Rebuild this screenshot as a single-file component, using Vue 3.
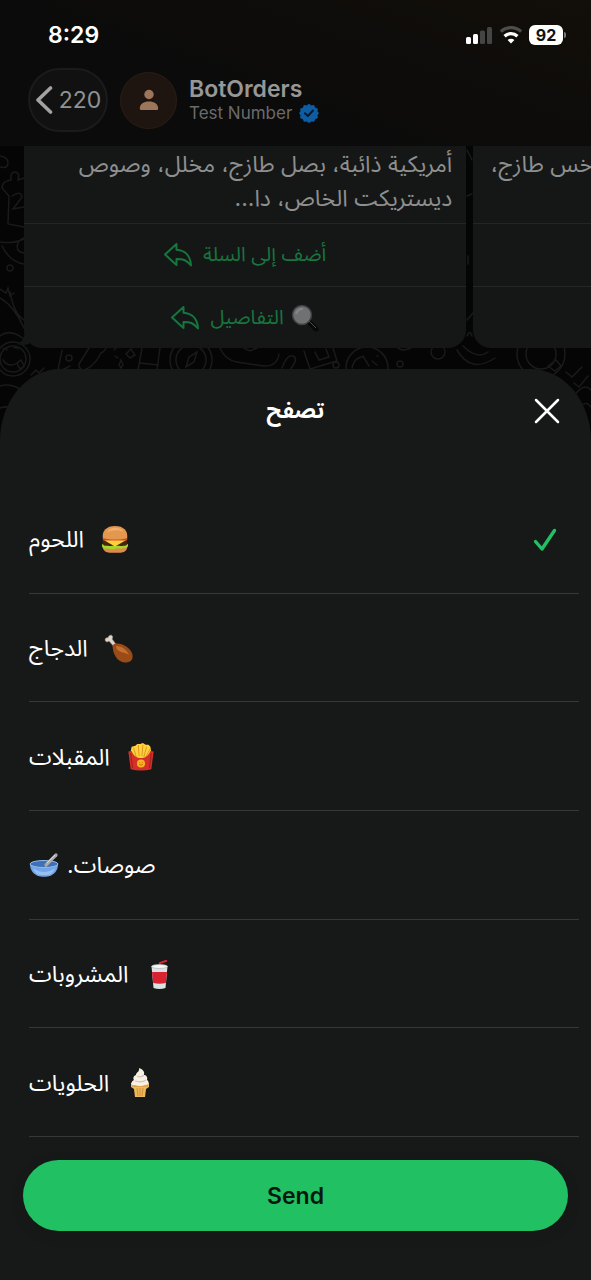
<script setup>
import { ref } from 'vue';

const selected = ref('meat');
const categories = [
    { id: 'meat', label: 'اللحوم', icon: 'burger', gap: 'wide' },
    { id: 'chicken', label: 'الدجاج', icon: 'drumstick', gap: 'wide' },
    { id: 'starters', label: 'المقبلات', icon: 'fries', gap: 'wide' },
    { id: 'sauces', label: 'صوصات.', icon: 'bowl', gap: 'tight' },
    { id: 'drinks', label: 'المشروبات', icon: 'cup', gap: 'wide' },
    { id: 'desserts', label: 'الحلويات', icon: 'cone', gap: 'wide' },
];
</script>

<template>
    <div class="screen">
        <header class="top">
            <div class="status">
                <span class="clock">8:29</span>
                <div class="indicators">
                    <svg width="27" height="18" viewBox="0 0 27 18" aria-hidden="true">
                        <rect x="0" y="11" width="5" height="7" rx="1.5" fill="#fff" />
                        <rect x="7" y="8" width="5" height="10" rx="1.5" fill="#fff" />
                        <rect x="14" y="4.5" width="5" height="13.5" rx="1.5" fill="#454544" />
                        <rect x="21" y="1" width="5" height="17" rx="1.5" fill="#454544" />
                    </svg>
                    <svg width="24" height="18" viewBox="0 0 24 18" fill="none" aria-hidden="true">
                        <path d="M1.8 5.6a15 15 0 0 1 20.400 0" stroke="#4d4d4c" stroke-width="3.2" />
                        <path d="M5.600 10.200a9.200 9.200 0 0 1 12.800 0" stroke="#fff" stroke-width="3.4" />
                        <path d="M12 17.5 8.600 14a4.900 4.900 0 0 1 6.800 0z" fill="#fff" />
                    </svg>
                    <span class="battery">92</span>
                </div>
            </div>
            <div class="contact">
                <button class="back" type="button">
                    <svg width="18" height="28" viewBox="0 0 18 28" fill="none" aria-hidden="true">
                        <path d="M15.500 2 3 14l12.500 12" stroke="#a2a2a2" stroke-width="3.6" stroke-linecap="round" stroke-linejoin="round" />
                    </svg>
                    <span>220</span>
                </button>
                <div class="avatar">
                    <svg width="20" height="22" viewBox="0 0 20 22" fill="#9c765a" aria-hidden="true">
                        <circle cx="10" cy="5.5" r="4.7" />
                        <path d="M.8 19.500c0-4.500 4-7 9.200-7s9.200 2.500 9.200 7c0 .9-.5 1.500-1.400 1.500H2.200c-.9 0-1.400-.6-1.400-1.500z" />
                    </svg>
                </div>
                <div class="who">
                    <h1>BotOrders</h1>
                    <p>
                        Test Number
                        <svg width="20" height="20" viewBox="0 0 20 20" aria-hidden="true">
                            <path d="M10 .8l2.300 1.700 2.800-.4 1.100 2.600 2.700 1.100-.4 2.800L20 10l-1.500 2.300.4 2.800-2.700 1.100-1.100 2.600-2.800-.4L10 20l-2.300-1.600-2.800.4-1.100-2.600-2.700-1.100.4-2.800L0 10l1.500-1.400-.4-2.800 2.700-1.100 1.100-2.600 2.800.4z" fill="#0d5da5" />
                            <path d="M6 10.300l2.800 2.800 5.200-5.600" fill="none" stroke="#0b1725" stroke-width="2" stroke-linecap="round" stroke-linejoin="round" />
                        </svg>
                    </p>
                </div>
            </div>
        </header>

        <main class="chat">
            <svg class="doodles" viewBox="0 0 591 340" preserveAspectRatio="xMidYMin slice" fill="none" stroke="#191a19" stroke-width="1.5" stroke-linecap="round" aria-hidden="true">
                <path d="M0 10q8 1 8 7t-8 4M2 42q0-7 9-8-1-8 4-8t3 8l6-2M2 42l7 8-1 28 16 3M12 50q9-6 10 1l-9 12 11-2M0 96q14 2 24-3M2 100q8 16 22 18M24 92c-8 2-10 14 0 15M0 143l6 4 2-5 2 8 4-3M0 152q14 8 24 30M10 146q4 22 14 28M0 190q10-8 24 3" />
                <circle cx="10" cy="122" r="3" />
                <circle cx="13" cy="213" r="17" />
                <circle cx="13" cy="213" r="13" />
                <path d="M3 203q3-2 4 1M14 202q3-2 4 1M3 214q6 9 16 2M17 217l4-3 3 6-4 3z" />
                <path d="M62 204l-4 20M79 218q0 6 5 6 10-3 17-17M79 218l10-16M101 207q3-1 5-5M114 204l3-3M115 210l3 2M126 208l5-5 4 6-5 3zM119 219l2-5 2 5-2 3zM142 202l-4 22M160 202l-3 22M140 217l18 2" />
                <circle cx="69" cy="212" r="3" />
                <circle cx="191" cy="214" r="21" />
                <circle cx="191" cy="214" r="15" />
                <path d="M186 221l3-10 8-5-3 10zM220 202q5 12 17 14l26 4q14 1 16-12M244 202l6 3 7-3M282 222q5-14 11-12t-3 14" />
                <path d="M304 205l6 18 27-8-4-13M315 206l4 8 10-3-3-8M398 202q4 4 13 0" />
                <circle cx="367" cy="222" r="21" />
                <path d="M352 222q2-10 10-11M363 210l6 10M372 215l5 4M377 210h1" />
                <circle cx="438" cy="206" r="7" />
                <circle cx="336" cy="219" r="3" />
                <circle cx="400" cy="218" r="3" />
                <path d="M457 204q14 24 38 8M463 200q14 14 25 6M467 4l5 10M467 50l5-2M468 110v8M467 174l6-7M467 190q3-7 5 0" />
                <circle cx="541" cy="208" r="24" />
                <circle cx="541" cy="208" r="15" />
                <path d="M548 220l8-6 5 6-6 5zM566 226l6 5 10-10M574 237l5 4 9-11M550 241q10 8 16 0M574 250q10-14 17-6M582 259q5-4 9 2" />
                <path d="M0 240q10-3 20 3M0 262q8-3 12 2M31 229l5-5 3 3 5-5M62 224l8-4" />
            </svg>
            <div class="carousel">
                <article class="card">
                    <p class="desc" dir="rtl">أمريكية ذائبة، بصل طازج، مخلل، وصوص ديستريكت الخاص، دا...</p>
                    <button class="reply" type="button">
                        <svg width="28" height="24" viewBox="0 0 28 24" aria-hidden="true">
                            <path d="M1 11.500 12.500 1v5.800C21 7.300 26.500 13 27 22.500c-4-5-7.500-6.800-14.500-6.600V22z" />
                        </svg>
                        <span dir="rtl">أضف إلى السلة</span>
                    </button>
                    <button class="reply" type="button">
                        <svg width="28" height="24" viewBox="0 0 28 24" aria-hidden="true">
                            <path d="M1 11.500 12.500 1v5.800C21 7.300 26.500 13 27 22.500c-4-5-7.500-6.800-14.500-6.600V22z" />
                        </svg>
                        <span class="details">
                            <span dir="rtl">التفاصيل</span>
                            <svg width="28" height="28" viewBox="0 0 28 28" aria-hidden="true">
                                <path d="M17 17l8 8" stroke="#080909" stroke-width="5" stroke-linecap="round" />
                                <path d="M18 17l7 7" stroke="#4c4e4e" stroke-width="1" />
                                <circle cx="11" cy="11" r="9.5" fill="#6f7172" stroke="#3e4040" stroke-width="1.5" />
                                <path d="M5 10a7 7 0 0 1 7-5" fill="none" stroke="#858787" stroke-width="2" />
                            </svg>
                        </span>
                    </button>
                    <svg class="tail" width="12" height="14" viewBox="0 0 12 14" aria-hidden="true">
                        <path d="M7 0q0 6-7 9 6 2 12 0V0z" fill="#151716" />
                    </svg>
                </article>
                <article class="card next">
                    <p class="desc" dir="rtl">خس طازج،</p>
                    <div class="reply"></div>
                    <div class="reply"></div>
                </article>
            </div>

            <form class="sheet" @submit.prevent>
                <div class="sheet-head">
                    <h2 dir="rtl">تصفح</h2>
                    <button class="close" type="button" aria-label="Close">
                        <svg width="26" height="26" viewBox="0 0 26 26" aria-hidden="true">
                            <path d="M2 2l22 22M24 2 2 24" stroke="#fff" stroke-width="2.5" stroke-linecap="round" />
                        </svg>
                    </button>
                </div>
                <div class="options">
                    <label v-for="item in categories" :key="item.id" class="option">
                        <span class="name" :class="item.gap">
                            <span dir="rtl">{{ item.label }}</span>
                            <svg v-if="item.icon === 'burger'" width="30" height="30" viewBox="-1 0 32 30" aria-hidden="true">
                                <path d="M2 22h26c0 5-4 6.500-7 6.500H9c-3 0-7-1.500-7-6.500z" fill="#dd8b4c" />
                                <path d="M1 20q3-3 6 0t6 0 6 0 5 0 5 0c0 4-3 4-5 3-3 3-5 0-8 1-4 2-6 0-9 0-4 1-6 0-6-4z" fill="#a4d52d" />
                                <path d="M2 16h26q1 5-3 5H5q-4 0-3-5z" fill="#43260f" />
                                <path d="M3 15h24l-5 3-7 4-7-4z" fill="#ffd03a" />
                                <path d="M2 13h26v2.500H2z" fill="#d6462e" />
                                <path d="M2 13C1 5 6 0 15 0s14 5 13 13c-8 2-18 2-26 0z" fill="#e4974e" />
                                <path d="M6 7q3-5 9-5t9 4q-9-3-18 1z" fill="#f0b06a" />
                            </svg>
                            <svg v-else-if="item.icon === 'drumstick'" width="30" height="30" viewBox="0 0 30 30" aria-hidden="true">
                                <path d="M5 7l7 8 2-2-6-8c2-3-1-5-3-3-1 1-1 2-1 2-3-1-4 3-1 4z" fill="#ddd4cc" stroke="#aa9990" stroke-width=".6" />
                                <path d="M10 10c7-2 15 3 18 9 2 6-1 10-7 9.500C13 28 9 20 8.500 12z" fill="#9a4b18" />
                                <path d="M12 12c6 0 11 4 13 9-4-3-7-2-10-4-2-1-3-3-3-5z" fill="#c4702f" />
                            </svg>
                            <svg v-else-if="item.icon === 'fries'" width="30" height="30" viewBox="-1 0 32 30" aria-hidden="true">
                                <path d="M4 9l1-5 4-1 2-2 3 0 3-1 3 2 3 0 2 2 1 6-3 9H7z" fill="#ffd13d" />
                                <path d="M7 5l3 10M12 2l1 12M17 2l-1 12M21 4l-3 11M25 6l-5 9" stroke="#dc941c" stroke-width="1" />
                                <path d="M1.500 9 5 8.500C7 14 11 16 15 16s8-2 10-7.500l3.500.5L26 28q-11 3-22 0z" fill="#d4302a" />
                                <path d="M4 11l2 16M26 11l-2 16" stroke="#a81e1c" stroke-width="1.2" />
                                <circle cx="15" cy="22" r="4.3" fill="#f8b51f" />
                                <path d="M13 21h1M16 21h1M13 23q2 1 4 0" fill="none" stroke="#cf6912" stroke-width="1" />
                            </svg>
                            <svg v-else-if="item.icon === 'bowl'" width="30" height="30" viewBox="0 0 30 30" aria-hidden="true">
                                <path d="M1 13h28c0 7-4 10-8 12-3 1-9 1-12 0-4-2-8-5-8-12z" fill="#72a5e8" />
                                <path d="M4 17q5 4 11 4t11-4q-2 6-7 7H11q-5-1-7-7z" fill="#97bff1" />
                                <ellipse cx="15" cy="13" rx="14" ry="3.5" fill="#3d70b4" stroke="#93bcf0" />
                                <path d="M17 14 27 4" stroke="#a9aaaa" stroke-width="3.2" stroke-linecap="round" />
                                <path d="M18 12l8-8" stroke="#dadada" stroke-width="1" />
                            </svg>
                            <svg v-else-if="item.icon === 'cup'" width="30" height="30" viewBox="0 0 30 30" aria-hidden="true">
                                <path d="M15 7l1-4 7-2.500" fill="none" stroke="#d62632" stroke-width="2" />
                                <path d="M7.500 6h16l-2 22q-6 2-12 0z" fill="#dce2e3" />
                                <path d="M8 12h15l-1.200 11q-6.300 1.500-12.600 0z" fill="#d9222f" />
                                <ellipse cx="15.5" cy="6.5" rx="8" ry="2" fill="#f5f7f7" stroke="#abb5b7" stroke-width=".7" />
                            </svg>
                            <svg v-else width="30" height="30" viewBox="0 0 30 30" aria-hidden="true">
                                <path d="M6 15h18v4l-3 2-1 8h-10l-1-8L6 19z" fill="#eeb95b" />
                                <path d="M7 18h16M12 20l1 8M15 20v8M18 20l-1 8" stroke="#c88731" stroke-width=".8" />
                                <path d="M14 0c1 4-3 4-3 7-3 1-3 4-2 5-4 2-3 6 1 5q5 2 10 0c5 0 4-4 2-5 1-3-1-5-3-5 1-4-2-6-5-7z" fill="#f7f1e5" />
                                <path d="M12 8q4 2 7-1M10 13q7 2 11-1" fill="none" stroke="#cfc5b5" stroke-width="1.2" />
                            </svg>
                        </span>
                        <input v-model="selected" type="radio" name="category" :value="item.id" />
                        <svg class="check" width="24" height="24" viewBox="0 0 24 24" fill="none" aria-hidden="true">
                            <path d="M2.500 13.500 9 21 21.500 2.500" stroke="#21c063" stroke-width="3.4" stroke-linecap="round" stroke-linejoin="round" />
                        </svg>
                    </label>
                </div>
                <button class="send" type="submit">Send</button>
            </form>
        </main>
    </div>
</template>

<style>
body {
    margin: 0;
    background: #050505;
}
</style>

<style scoped>
.screen {
    display: flex;
    flex-direction: column;
    min-height: 100vh;
    overflow: hidden;
    color: #fff;
    font-family: Inter, 'Noto Sans Arabic', 'DejaVu Sans', sans-serif;
}
button {
    border: 0;
    padding: 0;
    background: none;
    color: inherit;
    font-family: inherit;
    cursor: pointer;
}
svg {
    flex: none;
}
h1,
h2,
p {
    margin: 0;
}
.top {
    background: linear-gradient(200deg, #120e09, #0b0b0b 60%);
    padding-bottom: 14px;
}
.status {
    display: flex;
    justify-content: space-between;
    align-items: center;
    height: 68px;
    padding: 2px 28px 0 48px;
    box-sizing: border-box;
}
.clock {
    font-size: 23px;
    font-weight: 600;
}
.indicators {
    display: flex;
    align-items: center;
    gap: 6px;
}
.battery {
    position: relative;
    width: 34px;
    border-radius: 6px;
    background: #fff;
    color: #111;
    font-size: 16px;
    font-weight: 700;
    line-height: 20px;
    text-align: center;
}
.battery::after {
    content: '';
    position: absolute;
    top: 7px;
    right: -3px;
    width: 2px;
    height: 6px;
    border-radius: 0 2px 2px 0;
    background: #777;
}
.contact {
    display: flex;
    align-items: center;
    gap: 12px;
    padding: 0 28px;
}
.back {
    display: flex;
    align-items: center;
    justify-content: center;
    gap: 6px;
    width: 80px;
    height: 64px;
    box-sizing: border-box;
    border: 2px solid #1b1b1b;
    border-radius: 32px;
    background: #111;
    color: #929292;
    font-size: 23px;
}
.avatar {
    display: grid;
    place-items: center;
    width: 57px;
    height: 57px;
    box-sizing: border-box;
    border: 1px solid #2b1d16;
    border-radius: 50%;
    background: #1e1410;
}
.who h1 {
    color: #979797;
    font-size: 23px;
    font-weight: 600;
    line-height: 26px;
}
.who p {
    display: flex;
    align-items: center;
    gap: 7px;
    color: #6a6a6a;
    font-size: 17px;
    line-height: 22px;
}
.chat {
    position: relative;
    flex: 1;
    display: flex;
    flex-direction: column;
    background: #050505;
}
.doodles {
    position: absolute;
    top: 0;
    left: 0;
    width: 100%;
    height: 340px;
}
.carousel {
    position: relative;
    display: flex;
    gap: 7px;
    padding: 0 0 21px 24px;
}
.card {
    position: relative;
    flex: 0 0 78%;
    min-width: 0;
    box-sizing: border-box;
    border-radius: 0 0 18px 18px;
    background: #151716;
}
.next {
    flex: 1;
    margin-right: -2px;
    border-radius: 0 0 0 18px;
}
.desc {
    height: 77px;
    box-sizing: border-box;
    padding: 1px 14px 0;
    color: #8e8f8f;
    font-size: 23px;
    line-height: 34px;
}
.next .desc {
    padding: 1px 0 0;
    white-space: nowrap;
}
.reply {
    display: flex;
    justify-content: center;
    align-items: center;
    gap: 11px;
    width: 100%;
    height: 63px;
    box-sizing: border-box;
    border-top: 1px solid #242625;
    color: #17753f;
    font-size: 20px;
}
.reply:last-of-type {
    height: 62px;
}
.reply > svg {
    fill: none;
    stroke: #17753f;
    stroke-width: 2;
    stroke-linejoin: round;
}
.details {
    display: flex;
    align-items: center;
    gap: 7px;
}
.tail {
    position: absolute;
    left: -7px;
    bottom: -1px;
}
.sheet {
    position: relative;
    flex: 1;
    display: flex;
    flex-direction: column;
    border-radius: 60px 60px 0 0 / 72px 72px 0 0;
    background: #171918;
    padding-bottom: 49px;
}
.sheet-head {
    display: grid;
    grid-template-columns: 1fr auto 1fr;
    align-items: center;
    height: 84px;
    margin-bottom: 32px;
    padding: 0 31px;
}
.sheet-head h2 {
    grid-column: 2;
    font-size: 22px;
    font-weight: 700;
}
.close {
    display: flex;
    justify-self: end;
}
.options {
    flex: 1;
    display: flex;
    flex-direction: column;
    padding: 0 12px 0 29px;
}
.option {
    flex: 1;
    display: flex;
    justify-content: space-between;
    align-items: center;
    border-bottom: 1px solid #373938;
    padding: 2px 22px 0 0;
    cursor: pointer;
}
.name {
    display: flex;
    align-items: center;
    font-size: 23px;
}
.wide {
    gap: 16px;
}
.tight {
    flex-direction: row-reverse;
    gap: 8px;
}
.option input {
    appearance: none;
    width: 0;
    height: 0;
    margin: 0;
}
.check {
    visibility: hidden;
}
.option input:checked + .check {
    visibility: visible;
}
.send {
    margin: 23px 23px 0;
    height: 71px;
    border-radius: 36px;
    background: #21c063;
    color: #07170d;
    font-size: 23px;
    font-weight: 600;
    box-shadow: 0 4px 16px rgba(0, 0, 0, 0.08);
}
</style>
